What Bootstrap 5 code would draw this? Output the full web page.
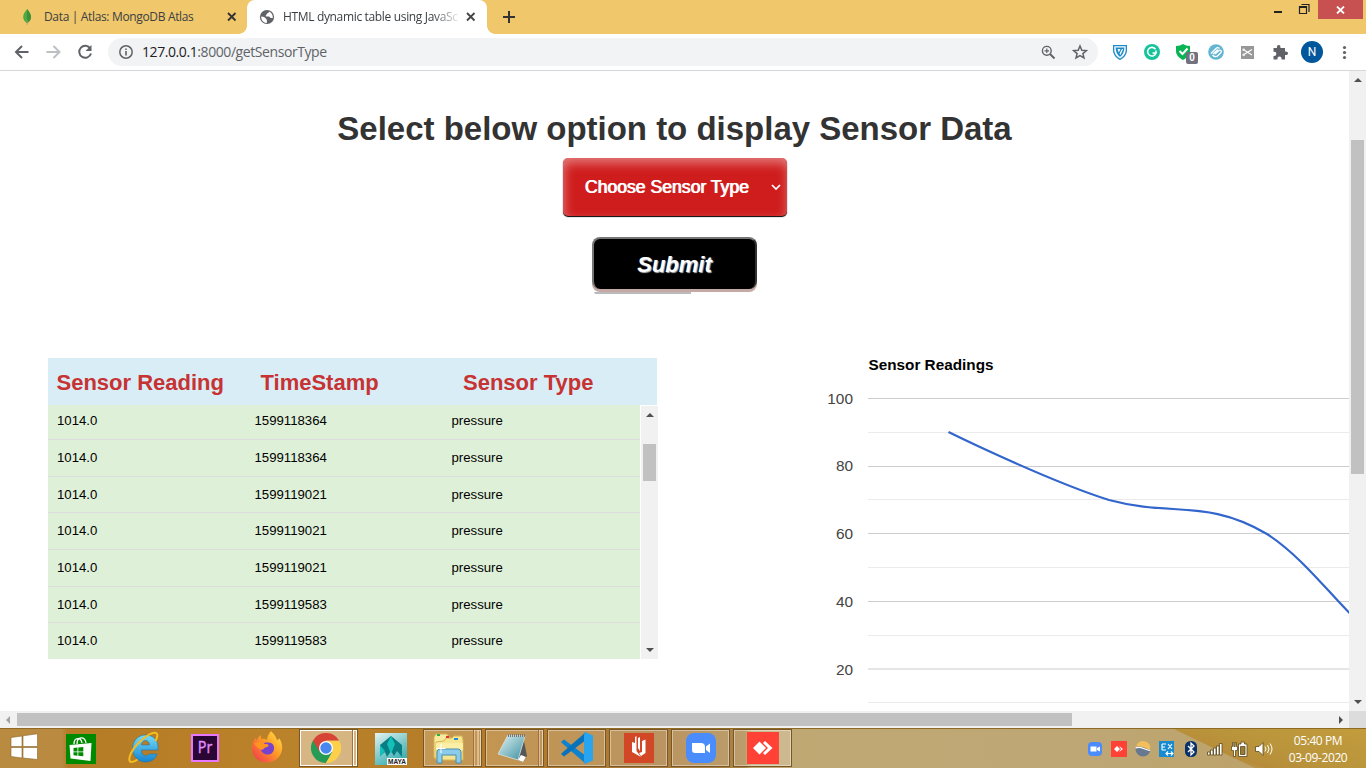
<!DOCTYPE html>
<html lang="en">
<head>
<meta charset="utf-8">
<meta name="viewport" content="width=device-width, initial-scale=1">
<title>HTML dynamic table using JavaScript</title>
<link href="https://cdn.jsdelivr.net/npm/bootstrap@5.3.0/dist/css/bootstrap.min.css" rel="stylesheet">
<style>
body{width:1366px;height:768px;overflow:hidden;background:#fff;color:#000;font-family:"Liberation Sans",Arial,sans-serif}
svg{display:block;flex:none}
.ui{font-family:"Open Sans","Noto Sans",sans-serif;white-space:nowrap}
.tabstrip{height:34px;background:#f0c76b}
.tab-idle{width:247px;padding-left:20px}
.tab-live{width:240px;padding-left:12px;background:#fff;border-radius:8px 8px 0 0;position:relative}
.tab-live::before,.tab-live::after{content:"";position:absolute;bottom:0;width:8px;height:8px}
.tab-live::before{left:-8px;background:radial-gradient(circle at 0 0,transparent 7.5px,#fff 8px)}
.tab-live::after{right:-8px;background:radial-gradient(circle at 100% 0,transparent 7.5px,#fff 8px)}
.tabname{font-size:12px;line-height:34px;color:#3c4043;letter-spacing:-.34px}
.fadeout{-webkit-mask-image:linear-gradient(90deg,#000 150px,transparent 178px);mask-image:linear-gradient(90deg,#000 150px,transparent 178px)}
.closewin{width:45px;height:19px;background:#c75050}
.toolbar{height:37px;border-bottom:1px solid #d5d7da}
.omni{width:990px;height:28px;border-radius:14px;background:#f1f3f4;margin-left:13px}
.url{font-size:14px;line-height:20px;color:#5f6368;letter-spacing:-.42px}
.url b{font-weight:400;color:#202124}
.cnt{left:11px;top:9px;width:12px;height:12px;background:#72727e;color:#fff;border-radius:2px;font:bold 10px/12px "Liberation Sans",sans-serif;text-align:center}
.viewport{height:640px}
.page{width:1349px;height:640px}
.page h1{font-size:33px;line-height:36px;font-weight:700;color:#333;margin:40px 0 11px;letter-spacing:-.01px}
.sensor-select{width:224px;height:58px;border-radius:5px;background:#cf1d1d;color:#fff;font-size:17.6px;padding:0 6px 0 22px;text-shadow:1px 0 0 #fff;box-shadow:inset 1px 5px 11px rgba(255,255,255,.42),0 1px 1px #000}
.go{width:165px;height:52px;margin-top:21px;border-radius:8px;background:#000;border:2px solid #333;border-top-color:#767676;border-left-color:#767676;border-bottom:0;color:#fff;font:italic bold 22px/52px "Liberation Sans",sans-serif;text-shadow:1px 1px 1px #bbb;box-shadow:0 3px 0 #c4a9a6;position:relative}
.go::after{content:"";position:absolute;left:0;bottom:-5px;width:97px;height:2px;background:#bbb;border-radius:0 0 0 6px}
.lower{margin-top:62px}
.readings{width:610px;margin:7px 0 0 48px}
.thead-bar{width:609px;height:47px;background:#d9edf7;color:#c73232;font-size:22px;font-weight:700;line-height:49px}
.rows{width:592px;background:#dff0d8}
.rows>div{height:36.7px;border-bottom:1px solid #ddd;font-size:13.2px;line-height:36px}
.rows>div:first-child{height:35px;line-height:32px}
.rows>div:last-child{border:0;height:36px}
.rows span:nth-child(1){width:206.5px;padding-left:9px}
.rows span:nth-child(2){width:197px}
.sbar{width:17px;background:#f1f1f1}
.thumb{background:#c1c1c1}
.tri{width:0;height:0;border:4px solid transparent;border-top-width:0;border-bottom-color:#505050}
.tri.dn{transform:rotate(180deg)}
.sb-h{height:17px;background:#f1f1f1}
.taskbar{height:40px;border-top:1px solid #8f6a24;background:linear-gradient(90deg,#b98b41 0,#b98a40 62px,#b67b25 68px,#ba822a 290px,#b47b28 500px,#a97a3a 660px,#a98547 745px,#c0a873 752px,#bea775 1090px,#bca062 1366px)}
.wash{background:linear-gradient(17deg,#bda16c 0 17%,#b78c39 30%,#b9943b 50%,#c29c3c 100%);clip-path:polygon(0 0,100% 0,100% 100%,42% 100%)}
.slot{width:62px}
.open{width:59px;height:38px;border:1px solid #795623;background:rgba(255,255,255,.2);box-shadow:inset 0 0 0 1px rgba(255,255,255,.4);margin-left:1px}
.hot{background:rgba(255,255,255,.42);box-shadow:inset 0 0 0 1px rgba(255,255,255,.95)}
.stack{width:5px;border:solid #a2723a;border-width:0 0 0 1px;box-shadow:inset 1px 0 0 rgba(255,255,255,.4),inset -1px 0 0 rgba(255,255,255,.35)}
.clock{width:80px;color:#fff;font-size:12px;line-height:17px}
</style>
</head>
<body class="d-flex flex-column">

<header class="tabstrip d-flex ui">
  <div class="tab-idle d-flex align-items-center">
    <svg width="14" height="18" viewBox="0 0 14 18"><path d="M7.2 1C4.5 4 3 6.500 3.200 9.600 3.400 12.500 5.500 14 7 15.200 9 13.800 11 12 11 9 11 6 9 3.500 7.200 1z" fill="#4faa41"/><path d="M7.200 1C9 4 11 6 11 9s-2 4.800-4 6.200z" fill="#3c8f38"/><path d="M7.200 12v5" stroke="#a9a387" stroke-width=".8"/></svg>
    <span class="tabname" style="width:183px;margin-left:10px">Data | Atlas: MongoDB Atlas</span>
    <svg width="10" height="10" viewBox="0 0 10 10"><path d="M1 1l7.500 7.500M8.500 1L1 8.500" stroke="#333" stroke-width="1.800"/></svg>
  </div>
  <div class="tab-live d-flex align-items-center">
    <svg width="16" height="16" viewBox="0 0 16 16"><circle cx="8" cy="8" r="7.100" fill="#5f6368"/><path d="M2.200 7.500c3 .2 4 1 4.500 2 .5.700 1.200.8 1.200 1.800v2.600C4.500 14 2 11.300 2.200 7.500zM10 2.600c-.2 1.200-.5 1.600-1.600 1.700-.7.200-.4 1.300-1.200 1.600-.7.400-.8 1.500.3 1.500h2.300c1 0 1.200 1.500 2.200 1.500h1.800C14 6 12.500 3.500 10 2.600z" fill="#fff"/></svg>
    <span class="tabname fadeout" style="width:178px;margin-left:8px">HTML dynamic table using JavaSc</span>
    <svg style="margin-left:5px" width="10" height="10" viewBox="0 0 10 10"><path d="M1 1l7.500 7.500M8.500 1L1 8.500" stroke="#444" stroke-width="1.800"/></svg>
  </div>
  <svg style="margin:10px 0 0 15px" width="14" height="14"><path d="M7 1v12M1 7h12" stroke="#333" stroke-width="2"/></svg>
  <div class="ms-auto d-flex align-items-start">
    <svg width="45" height="19"><path d="M1 12h8" stroke="#222" stroke-width="2"/><path d="M26.500 6.500h7v7h-7zM26 7.500h8M28.500 4.500h7.500v7.500" fill="none" stroke="#222" stroke-width="1.200"/></svg>
    <div class="closewin d-flex align-items-center justify-content-center" style="margin-right:3px"><svg width="9" height="8"><path d="M1 .5l7 7M8 .5l-7 7" stroke="#fff" stroke-width="1.800"/></svg></div>
  </div>
</header>

<nav class="toolbar d-flex align-items-center ui">
  <svg width="95" height="24" viewBox="0 0 95 24" fill="none" stroke-width="2"><path d="M28.500 12H16.500M22 6l-6 6 6 6" stroke="#5f6368"/><path d="M46.500 12H59M53.500 6l6 6-6 6" stroke="#bdc0c3"/><path d="M90.300 8.500A6 6 0 1 0 91 13.500" stroke="#5f6368"/><path d="M91.500 5v6h-6z" fill="#5f6368"/></svg>
  <div class="omni d-flex align-items-center">
    <svg style="margin-left:10px" width="16" height="16" fill="none" stroke="#5f6368"><circle cx="8" cy="8" r="6.200" stroke-width="1.500"/><path d="M8 7v4.500M8 4.500v1.500" stroke-width="1.600"/></svg>
    <span class="url" style="margin:-1px 0 0 8px"><b>127.0.0.1</b>:8000/getSensorType</span>
    <svg class="ms-auto" width="15" height="15" viewBox="0 0 15 15" fill="none" stroke="#5f6368"><circle cx="5.800" cy="5.800" r="4.400" stroke-width="1.400"/><path d="M9 9l4.500 4.500" stroke-width="2"/><path d="M5.800 3.500v4.600M3.500 5.800h4.600" stroke-width="1.200"/></svg>
    <svg style="margin:0 10px 0 16px" width="16" height="16" viewBox="0 0 16 16"><path d="M8 2l1.800 4.200 4.600.4-3.500 3L12 14l-4-2.400L4 14l1.100-4.400-3.500-3 4.600-.4z" fill="none" stroke="#5f6368" stroke-width="1.500"/></svg>
  </div>
  <svg style="margin-left:14px" width="16" height="18" viewBox="0 0 16 18"><path d="M1 2h14v5c0 4.500-3 8-7 10-4-2-7-5.500-7-10z" fill="#1b8cc9"/><path d="M2.300 3.300h11.400V7c0 3.700-2.500 6.700-5.700 8.500C4.800 13.700 2.300 10.700 2.300 7z" fill="#fff"/><path d="M3.600 4.500h8.800C12.400 9 10.500 12 8 14 5.500 12 3.600 9 3.600 4.500z" fill="#1b8cc9"/><path d="M5.500 6h3L6.800 9.500zM10 6h1.200L8.500 12l-1-1.500z" fill="#fff"/></svg>
  <svg style="margin-left:16px" width="16" height="16"><circle cx="8" cy="8" r="8" fill="#15c39a"/><path d="M11.500 5.300A4.300 4.300 0 1 0 12 9H8.500M12 6.500V9.500" fill="none" stroke="#fff" stroke-width="1.600"/></svg>
  <div class="position-relative" style="margin-left:15px"><svg width="18" height="18" viewBox="0 0 18 18"><path d="M1 3c3 0 5-1 7-2 2 1 4 2 7 2v5c0 4-3 7-7 9-4-2-7-5-7-9z" fill="#09b454"/><path d="M4.500 8l3 3 5-5.500" fill="none" stroke="#fff" stroke-width="2"/></svg><span class="cnt position-absolute">0</span></div>
  <svg style="margin-left:15px" width="16" height="16"><circle cx="8" cy="8" r="7.800" fill="#63b5d2"/><path d="M3 9.500l5-5c1-1 2.500-1 3.500 0M5 10l5-4.500M4.500 11c2 2 4 2 5.500.5L13 8.500c1-1.500-.5-3-2-2L7 10" fill="none" stroke="#fff" stroke-width="1.300"/></svg>
  <svg style="margin-left:17px" width="13" height="13"><path d="M0 0h13v13H0z" fill="#979797"/><path d="M3 4l8 5M3 8.500l8-5" stroke="#fff" stroke-width="1.200"/><circle cx="2.700" cy="3.800" r="1.400" fill="#eee"/><circle cx="2.700" cy="8.800" r="1.400" fill="#eee"/></svg>
  <svg style="margin-left:18px" width="17" height="17" viewBox="0 0 17 17"><path d="M1.500 4H5C4.600 2 5.400 1 6.700 1S8.800 2 8.400 4H13v3.500c2-.3 3 .500 3 1.800s-1 2-3 1.700V15.500H9.500c.2-2-.6-3-2-3s-2.300 1-2 3h-4V12c2 .2 2.800-.7 2.800-2.200S3.500 7.500 1.500 7.800z" fill="#5f6368"/></svg>
  <svg style="margin-left:12px" width="22" height="22"><circle cx="11" cy="11" r="11" fill="#01579b"/><text x="11" y="15" text-anchor="middle" font-size="12" fill="#fff" font-family="Roboto, sans-serif">N</text></svg>
  <svg style="margin-left:19px" width="5" height="15" fill="#5f6368"><circle cx="2.500" cy="2.500" r="1.600"/><circle cx="2.500" cy="7.500" r="1.600"/><circle cx="2.500" cy="12.500" r="1.600"/></svg>
</nav>

<div class="viewport d-flex">
  <main class="page d-flex flex-column overflow-hidden">
    <h1 class="text-center">Select below option to display Sensor Data</h1>
    <div class="d-flex flex-column align-items-center">
      <div class="sensor-select d-flex align-items-center justify-content-between" role="combobox"><span>Choose Sensor Type</span><svg width="10" height="8"><path d="M1 2l4 4 4-4" fill="none" stroke="#fff" stroke-width="1.700"/></svg></div>
      <button class="go p-0" type="button">Submit</button>
    </div>
    <section class="lower d-flex">
      <div class="readings">
        <div class="thead-bar d-flex"><span style="width:212.500px;padding-left:8.500px">Sensor Reading</span><span style="width:202.500px">TimeStamp</span><span>Sensor Type</span></div>
        <div class="d-flex justify-content-between">
          <div class="rows">
            <div class="d-flex"><span>1014.0</span><span>1599118364</span><span>pressure</span></div>
            <div class="d-flex"><span>1014.0</span><span>1599118364</span><span>pressure</span></div>
            <div class="d-flex"><span>1014.0</span><span>1599119021</span><span>pressure</span></div>
            <div class="d-flex"><span>1014.0</span><span>1599119021</span><span>pressure</span></div>
            <div class="d-flex"><span>1014.0</span><span>1599119021</span><span>pressure</span></div>
            <div class="d-flex"><span>1014.0</span><span>1599119583</span><span>pressure</span></div>
            <div class="d-flex"><span>1014.0</span><span>1599119583</span><span>pressure</span></div>
          </div>
          <div class="sbar d-flex flex-column align-items-center" style="margin-top:1px">
            <div class="tri" style="margin-top:7px"></div>
            <div class="thumb" style="width:13px;height:37px;margin-top:27px"></div>
            <div class="tri dn mt-auto" style="margin-bottom:7px"></div>
          </div>
        </div>
      </div>
      <svg style="margin-left:162px" width="529" height="360" viewBox="820 351 529 360" font-family="Liberation Sans, sans-serif" font-size="15.400">
        <text x="868.500" y="370" font-weight="700" textLength="125" lengthAdjust="spacingAndGlyphs">Sensor Readings</text>
        <g stroke="#ebebeb"><path d="M868 432.500h481M868 499.500h481M868 567.500h481M868 635.500h481M868 702.500h481"/></g>
        <g stroke="#ccc"><path d="M868 398.500h481M868 466.500h481M868 533.500h481M868 601.500h481M868 669h481"/></g>
        <g fill="#444" text-anchor="end"><text x="853" y="404">100</text><text x="853" y="471">80</text><text x="853" y="539">60</text><text x="853" y="607">40</text><text x="853" y="675">20</text></g>
        <path d="M948.500 432C948.500 432 1046 480 1109 500 1172 517 1207 498.500 1267 534 1300 555 1330 594 1350 613.500" fill="none" stroke="#3366cc" stroke-width="2.200"/>
      </svg>
    </section>
  </main>
  <div class="sbar d-flex flex-column align-items-center">
    <div class="tri" style="margin-top:7px"></div>
    <div class="thumb" style="width:13px;height:334px;margin-top:58px"></div>
    <div class="tri dn mt-auto" style="margin-bottom:7px"></div>
  </div>
</div>

<div class="sb-h d-flex align-items-center">
  <svg width="17" height="17"><path d="M10 5v8L6 9z" fill="#a3a3a3"/></svg>
  <div class="thumb" style="width:1055px;height:13px"></div>
  <svg class="ms-auto" width="17" height="17"><path d="M7 5v8l4-4z" fill="#505050"/></svg>
  <div class="h-100" style="width:17px;background:#dcdcdc"></div>
</div>

<footer class="taskbar d-flex position-relative">
  <div class="wash position-absolute end-0 top-0 h-100" style="width:192px"></div>
  <svg width="50" height="38" viewBox="0 0 50 38" fill="#fff" stroke="#8a6428" stroke-width=".6"><path d="M11 8.500l11-1.500v10.500H11zM23 6.800l14.500-2v12.700H23zM11 18.500h11V29l-11-1.500zM23 18.500h14.500v12L23 29z"/></svg>
  <div class="slot d-flex align-items-center justify-content-center"><svg width="30" height="30"><path d="M0 0h30v30H0z" fill="#008a00"/><path d="M3.500 11l22-2-1 18-20-2.500z" fill="#fff"/><path d="M8 10c0-7 7-7 8-1M11 10c0-8 8-8 9-1" fill="none" stroke="#fff" stroke-width="1.300"/><path d="M7.500 14l4-.4v3.900h-4zM12.300 13.400l5-.5v4.600h-5zM7.500 18.300h4v3.400l-4-.4zM12.300 18.300h5v4l-5-.5z" fill="#008a00"/></svg></div>
  <div class="slot d-flex align-items-center justify-content-center"><svg width="32" height="34" viewBox="0 0 32 34" style="margin:-3px 0 0 2px"><defs><linearGradient id="ieb" x2="0" y2="1"><stop stop-color="#74dcfa"/><stop offset="1" stop-color="#1784cf"/></linearGradient></defs><path d="M30 20C31 10 25 5 17.500 5S4.500 11 4.500 18.500 10 32 17.500 32c6 0 10-3 11.500-8h-8c-1.500 2.500-6 2-7-1-.3-1-.4-2-.4-3zM13.500 15c.5-6 7.500-6 8 0z" fill="url(#ieb)" stroke="#2374a8" stroke-width=".6"/><path d="M9.500 29.500C6 32 2 33 1.500 30.500.5 27 4 20 9 14.500 15 8 24 1.500 28 3c2.500 1 1 5-.5 8" fill="none" stroke="#f4bd20" stroke-width="2"/></svg></div>
  <div class="slot d-flex align-items-center justify-content-center"><svg width="28" height="30"><path d="M1 1h26v26H1z" fill="#2a0634" stroke="#e777ff" stroke-width="2"/><text x="14" y="18.500" text-anchor="middle" font-family="Open Sans, sans-serif" font-size="16" textLength="14.500" lengthAdjust="spacingAndGlyphs" fill="#e58cff" stroke="#e58cff" stroke-width=".4">Pr</text></svg></div>
  <div class="slot d-flex align-items-center justify-content-center"><svg width="32" height="32" viewBox="0 0 32 32" style="margin-top:-3px"><defs><linearGradient id="ffx" x1="1" x2="0" y2="1"><stop stop-color="#ffe84a"/><stop offset=".45" stop-color="#ff9a25"/><stop offset="1" stop-color="#f02c55"/></linearGradient></defs><path d="M20 0c4 4 5 6 6 9 1.500 0 2-1 2-2 3 4 3.500 8 3 12C29.500 27 23 31.500 16 31.500 7 31.500 1 25 1 17c0-4 1-7 3.500-10l1 3C7 5.500 9 5 10 4v4c3-.5 5 .5 6 1 0-4 2-6 4-9z" fill="url(#ffx)"/><path d="M9.500 16c1-4 4-5 8-4.500 4 0 6 3 5.500 6.500-.5 4-4 6-7 5.500-4-.5-6.500-3-6.500-7.500z" fill="#7642cf"/><path d="M3 12c4-1 9-1 11 1 4 0 5 2 2 3-3 .5-3 2-5 3-3-1-6-3-8-7z" fill="#ff9420"/></svg></div>
  <div class="slot d-flex"><div class="open hot d-flex" style="margin-left:1px"><div class="d-flex align-items-center justify-content-center" style="width:52px"><svg width="30" height="30" viewBox="0 0 30 30"><path d="M2 7.500A15 15 0 0 0 15 30l6.500-11.300L15 15z" fill="#269b55"/><path d="M28 7.500A15 15 0 0 1 15 30l6.500-11.300L15 7.500z" fill="#fdd04b"/><path d="M2 7.500A15 15 0 0 1 28 7.500H15L8.500 18.700z" fill="#d74335"/><circle cx="15" cy="15" r="7" fill="#fff"/><circle cx="15" cy="15" r="5.700" fill="#4887ee"/></svg></div><div class="stack" style="box-shadow:inset 1px 0 0 #fff"></div></div></div>
  <div class="slot d-flex align-items-center justify-content-center"><svg width="32" height="34"><defs><linearGradient id="my" x2=".6" y2="1"><stop stop-color="#e4f2f2"/><stop offset="1" stop-color="#39adb0"/></linearGradient></defs><path d="M0 1h32v32H0z" fill="url(#my)"/><path d="M5 24V13L16 4l11 9v12l-5-6-3 5-3-5-4 6-2-5z" fill="#087e82"/><path d="M5 13l5 6-5 6zM16 4l-4 8 4 10 4-10z" fill="#14bfba"/><path d="M12 26h20v7H12z" fill="#fff"/><text x="13" y="32" textLength="18" font-size="7" font-weight="700" font-family="Liberation Sans, sans-serif" lengthAdjust="spacingAndGlyphs" fill="#222">MAYA</text></svg></div>
  <div class="slot"><div class="open d-flex"><div class="d-flex align-items-center justify-content-center" style="width:50px"><svg width="33" height="32" viewBox="0 0 33 32"><path d="M2 5l2-3h11l2 3v21H2z" fill="#f8e99c" stroke="#d4b24a"/><path d="M12 9l2-3h6l2-2h8l1 4v20H4V10z" fill="#f6e58f" stroke="#d6b653"/><path d="M5 2h3v2H5z" fill="#22b14c"/><path d="M14 4h3v2h-3z" fill="#d33"/><path d="M22 6h4v2h-4z" fill="#288bd6"/><path d="M4 11h27v7H4z" fill="#fbeea6"/><path d="M5 31V21c0-3 1-4 4-4h16c3 0 4 1 4 4v10h-5v-8H10v8z" fill="#8accea" stroke="#478eb5"/><path d="M9 12v9M4.500 16.500h9" stroke="#fff"/></svg></div><div class="stack"></div><div class="stack border-0" style="width:3px"></div></div></div>
  <div class="slot"><div class="open d-flex"><div class="d-flex align-items-center justify-content-center" style="width:52px"><svg width="31" height="32" viewBox="0 0 31 32"><defs><linearGradient id="np" x2="1" y2="1"><stop stop-color="#e4f4f3"/><stop offset="1" stop-color="#398fa1"/></linearGradient></defs><path d="M26 4l4 20-4 6-5-2z" fill="#54565a"/><path d="M11 3l17 1-7 24L1 22z" fill="url(#np)" stroke="#d9e2df" stroke-width=".8"/><path d="M21 28l5 2 3-5-5-2z" fill="#fff"/><path d="M11 3.500h17" stroke="#777" stroke-width="3" stroke-dasharray="1 1"/></svg></div><div class="stack"></div></div></div>
  <div class="slot"><div class="open d-flex align-items-center justify-content-center"><svg width="32" height="32" viewBox="0 0 32 32"><path d="M0 10l3-2.500L25 24v8L2 12z" fill="#0d83cf"/><path d="M0 22l3 2.500L25 8V0L2 20z" fill="#0873bb"/><path d="M24 0l8 3.500v25L24 32l-1-3V3z" fill="#29a4ee"/></svg></div></div>
  <div class="slot"><div class="open d-flex align-items-center justify-content-center"><svg width="30" height="30"><path d="M0 0h30v30H0z" fill="#d24726"/><path d="M11 4l1.500-1v15l4.500 6-9-5V9l3 1zM14 5l2-1v14l-2-3zM18 8l3.500-1.500V20L17 23l-2-3 3-1z" fill="#fff"/></svg></div></div>
  <div class="slot"><div class="open d-flex align-items-center justify-content-center"><svg width="30" height="30"><rect width="30" height="30" rx="8" fill="#4a8cfc"/><path d="M6 10h9q4 0 4 4v6H9q-3 0-3-3zM20 13.500l4-3v9.500l-4-3z" fill="#fff"/></svg></div></div>
  <div class="slot"><div class="open d-flex align-items-center justify-content-center"><svg width="32" height="32"><path d="M0 0h32v32H0z" fill="#ff4136"/><path d="M6 16l6.500-6.500L19 16l-6.500 6.500zM16 11l2-2 7.500 7-7.500 7-2-2 5-5z" fill="#fff"/></svg></div></div>
  <div class="ms-auto d-flex align-items-center position-relative">
    <svg width="190" height="20" viewBox="0 0 190 20">
      <rect x="1" y="3" width="14" height="14" rx="4" fill="#4a8cfc"/><path d="M3.500 7.500h6v5h-6zM10 9l3-1.500v5L10 11z" fill="#fff"/>
      <path d="M24 2h16v16H24z" fill="#ff4136"/><path d="M27 10l3-3 3 3-3 3zM32 7l4 3-4 3 2-3z" fill="#fff"/>
      <circle cx="56" cy="10" r="7.500" fill="#66798f"/><path d="M48.700 8a7.500 7.500 0 0 1 14.700 3c-4 0-7-5-14.700-3z" fill="#f2bf5c"/><path d="M48.600 9c6-2.500 9 2.500 14.700 2.500" fill="none" stroke="#fff" stroke-width="1.200"/>
      <path d="M72 2h15v16H72z" fill="#168bd1"/><path d="M75 5h4M75 8h3M75 11h4M75 5v6M81 5l4 5M85 5l-4 5M79 14.500h7M81 12.500l-2 2 2 2M84 12.500l2 2-2 2" fill="none" stroke="#fff" stroke-width="1.100"/>
      <rect x="98" y="2" width="12" height="16" rx="5.500" fill="#07306a"/><path d="M101 7l6 6-3 3V4l3 3-6 6" fill="none" stroke="#fff" stroke-width="1.300"/>
      <g fill="#fff" stroke="#5b471b" stroke-width=".8"><path d="M120.500 13h2.500v3h-2.500zM123.500 11h2.500v5h-2.500zM126.500 9h2.500v7h-2.500zM129.500 7h2.500v9h-2.500zM132.500 4.500h2.500V16h-2.500z"/><path d="M151.500 5h2.500V3h3.500v2h2.500v12.500h-8.500z"/><path d="M153.500 7.500h4.500v8h-4.500z" fill="#9a7b35"/><path d="M144.500 7.500h1V3.500h1.300v4h1.400v-4h1.300v4h1v4h-2v6h-2v-6h-2zM168.500 7.500h3.500l4-4v13l-4-4h-3.500z"/></g><path d="M178 7.500q2 2.500 0 5M180.500 6q3 4 0 8M183 4.500q4 5.500 0 11" fill="none" stroke="#fff"/>
    </svg>
    <div class="clock ui text-center" style="margin:1px 8px 0 1px"><div style="letter-spacing:-.4px">05:40 PM</div><div style="letter-spacing:-.4px">03-09-2020</div></div>
  </div>
</footer>
<script src="https://cdn.jsdelivr.net/npm/bootstrap@5.3.0/dist/js/bootstrap.bundle.min.js"></script>
</body>
</html>
